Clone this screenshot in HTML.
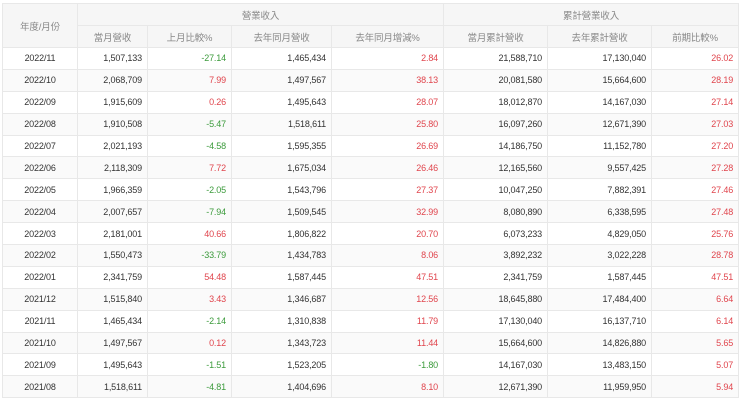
<!DOCTYPE html>
<html><head><meta charset="utf-8"><style>
html,body{margin:0;padding:0;background:#fff;width:740px;height:400px;overflow:hidden}
table{position:absolute;left:2px;top:3px;border-collapse:collapse;table-layout:fixed;width:736px;font-family:"Liberation Sans","Noto Sans CJK TC",sans-serif;font-size:9px;color:#333;letter-spacing:-0.15px}
td,th{border:1px solid #e8e8e8;padding:0 5px;white-space:nowrap;overflow:hidden}
th{background:#f6f6f6;color:#888;font-weight:normal;height:21px;font-size:9.5px}
td{height:20.9px;text-align:right}
td:first-child{text-align:center}
tbody tr:nth-child(even) td{background:#fafafa}
.r{color:#e0454d}.g{color:#3c9b3c}
</style></head><body>
<table>
<colgroup><col style="width:75px"><col style="width:70px"><col style="width:84px"><col style="width:100px"><col style="width:112px"><col style="width:104px"><col style="width:104px"><col style="width:87px"></colgroup>
<thead>
<tr><th rowspan="2">年度/月份</th><th colspan="4">營業收入</th><th colspan="3">累計營業收入</th></tr>
<tr><th>當月營收</th><th>上月比較%</th><th>去年同月營收</th><th>去年同月增減%</th><th>當月累計營收</th><th>去年累計營收</th><th>前期比較%</th></tr>
</thead>
<tbody>
<tr><td>2022/11</td><td>1,507,133</td><td class="g">-27.14</td><td>1,465,434</td><td class="r">2.84</td><td>21,588,710</td><td>17,130,040</td><td class="r">26.02</td></tr>
<tr><td>2022/10</td><td>2,068,709</td><td class="r">7.99</td><td>1,497,567</td><td class="r">38.13</td><td>20,081,580</td><td>15,664,600</td><td class="r">28.19</td></tr>
<tr><td>2022/09</td><td>1,915,609</td><td class="r">0.26</td><td>1,495,643</td><td class="r">28.07</td><td>18,012,870</td><td>14,167,030</td><td class="r">27.14</td></tr>
<tr><td>2022/08</td><td>1,910,508</td><td class="g">-5.47</td><td>1,518,611</td><td class="r">25.80</td><td>16,097,260</td><td>12,671,390</td><td class="r">27.03</td></tr>
<tr><td>2022/07</td><td>2,021,193</td><td class="g">-4.58</td><td>1,595,355</td><td class="r">26.69</td><td>14,186,750</td><td>11,152,780</td><td class="r">27.20</td></tr>
<tr><td>2022/06</td><td>2,118,309</td><td class="r">7.72</td><td>1,675,034</td><td class="r">26.46</td><td>12,165,560</td><td>9,557,425</td><td class="r">27.28</td></tr>
<tr><td>2022/05</td><td>1,966,359</td><td class="g">-2.05</td><td>1,543,796</td><td class="r">27.37</td><td>10,047,250</td><td>7,882,391</td><td class="r">27.46</td></tr>
<tr><td>2022/04</td><td>2,007,657</td><td class="g">-7.94</td><td>1,509,545</td><td class="r">32.99</td><td>8,080,890</td><td>6,338,595</td><td class="r">27.48</td></tr>
<tr><td>2022/03</td><td>2,181,001</td><td class="r">40.66</td><td>1,806,822</td><td class="r">20.70</td><td>6,073,233</td><td>4,829,050</td><td class="r">25.76</td></tr>
<tr><td>2022/02</td><td>1,550,473</td><td class="g">-33.79</td><td>1,434,783</td><td class="r">8.06</td><td>3,892,232</td><td>3,022,228</td><td class="r">28.78</td></tr>
<tr><td>2022/01</td><td>2,341,759</td><td class="r">54.48</td><td>1,587,445</td><td class="r">47.51</td><td>2,341,759</td><td>1,587,445</td><td class="r">47.51</td></tr>
<tr><td>2021/12</td><td>1,515,840</td><td class="r">3.43</td><td>1,346,687</td><td class="r">12.56</td><td>18,645,880</td><td>17,484,400</td><td class="r">6.64</td></tr>
<tr><td>2021/11</td><td>1,465,434</td><td class="g">-2.14</td><td>1,310,838</td><td class="r">11.79</td><td>17,130,040</td><td>16,137,710</td><td class="r">6.14</td></tr>
<tr><td>2021/10</td><td>1,497,567</td><td class="r">0.12</td><td>1,343,723</td><td class="r">11.44</td><td>15,664,600</td><td>14,826,880</td><td class="r">5.65</td></tr>
<tr><td>2021/09</td><td>1,495,643</td><td class="g">-1.51</td><td>1,523,205</td><td class="g">-1.80</td><td>14,167,030</td><td>13,483,150</td><td class="r">5.07</td></tr>
<tr><td>2021/08</td><td>1,518,611</td><td class="g">-4.81</td><td>1,404,696</td><td class="r">8.10</td><td>12,671,390</td><td>11,959,950</td><td class="r">5.94</td></tr>
</tbody>
</table>
</body></html>
